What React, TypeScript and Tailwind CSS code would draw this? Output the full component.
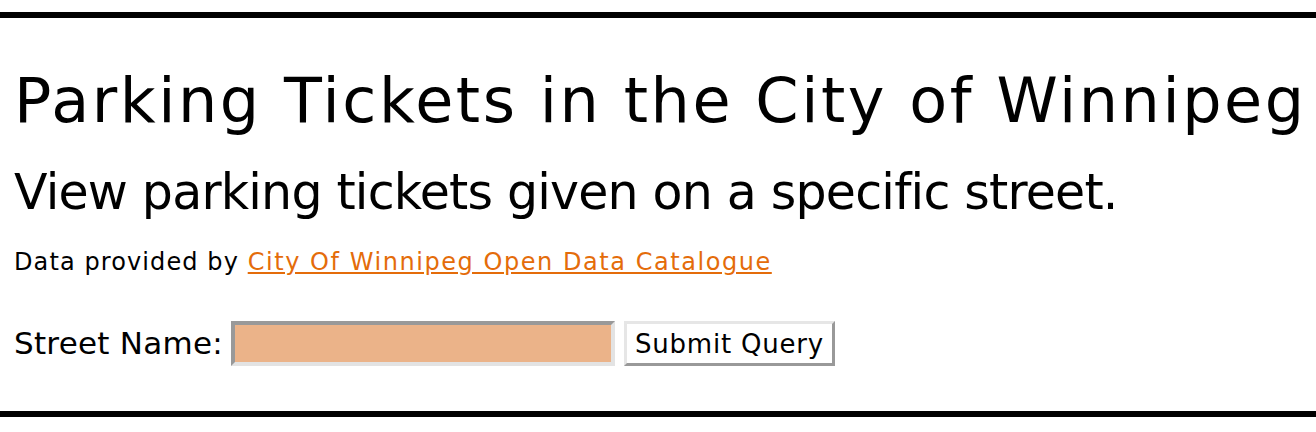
export default function App() {
  return (
    <div className="min-h-[432px] bg-white pt-3 font-['DejaVu_Sans',sans-serif] text-black">
      <div className="border-y-[6px] border-black px-[14px] pt-[46px] pb-[45px]">
        <h1 className="text-[62px] leading-[74px] tracking-[2.55px] whitespace-nowrap">
          Parking Tickets in the City of Winnipeg
        </h1>
        <h2 className="mt-[26px] text-[49px] leading-[58px] tracking-[-0.8px] whitespace-nowrap">
          View parking tickets given on a specific street.
        </h2>
        <p className="mt-[26px] text-[24px] leading-[28px] whitespace-nowrap">
          <span className="tracking-[1.1px]">Data provided by </span>
          <a href="#" className="text-[#e46c0a] underline tracking-[1.55px]">
            City Of Winnipeg Open Data Catalogue
          </a>
        </p>
        <form className="mt-[45px] flex h-[45px] items-center" onSubmit={(e) => e.preventDefault()}>
          <label className="text-[31px] leading-[45px] tracking-[0.25px]">Street Name:</label>
          <input
            type="text"
            className="ml-[8px] h-[45px] w-[384px] border-4 border-t-[#999999] border-l-[#999999] border-b-[#e3e3e3] border-r-[#e3e3e3] bg-[#ebb389] outline-none"
          />
          <button
            type="submit"
            className="ml-[9px] h-[45px] w-[211px] border-[3px] border-t-[#e6e6e6] border-l-[#e6e6e6] border-b-[#999999] border-r-[#999999] bg-white text-[26px] leading-none tracking-[0.8px]"
          >
            Submit Query
          </button>
        </form>
      </div>
    </div>
  );
}
